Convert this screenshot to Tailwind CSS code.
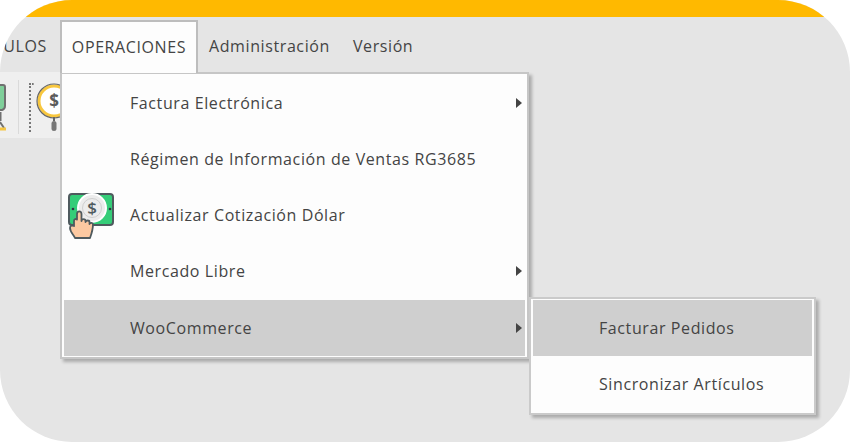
<!DOCTYPE html>
<html><head><meta charset="utf-8"><script src="https://cdn.jsdelivr.net/npm/@tailwindcss/browser@4"></script></head>
<body class="bg-white">
<div class="relative w-[850px] h-[442px] rounded-[72px] overflow-hidden bg-[#e5e5e5] font-['Open_Sans',sans-serif] text-[16px] text-[#444] tracking-[0.6px]">
  <div class="h-[17px] bg-[#ffb900]"></div>
  <div class="h-[55px] flex items-start pt-[3px]">
    <div class="w-[60px] h-[52px] flex items-center justify-end pr-[13px] pb-[1px]"><span>ULOS</span></div>
    <div class="w-[138px] h-[53px] bg-[#fdfdfd] border-[2px] border-b-0 border-[#bdbdbd] flex items-center justify-center pb-[2px] relative z-20">OPERACIONES</div>
    <div class="ml-[11px] h-[52px] flex items-center pb-[1px]">Administración</div>
    <div class="ml-[23px] h-[52px] flex items-center pb-[1px]">Versión</div>
  </div>
  <div class="h-[66px] w-[60px] bg-[#efefef] relative">
    <svg class="absolute left-0 top-[12px]" width="8" height="48" viewBox="0 0 8 48"><path d="M-4 1h7a2 2 0 0 1 2 2v19q0 3-3 4h-6z" fill="#7fcf9a" stroke="#707070" stroke-width="2"/><path d="M0 28v9" stroke="#707070" stroke-width="3"/><path d="M0 38l4 6" stroke="#707070" stroke-width="2"/><path d="M-2 45h8" stroke="#f5c542" stroke-width="3"/></svg>
    <div class="absolute left-[18px] top-[8px] w-px h-[54px] bg-[#dadada]"></div>
    <div class="absolute left-[29px] top-[11px] h-[49px] w-[5px] border-l-[2px] border-t-[2px] border-dotted border-[#777]"></div>
    <svg class="absolute left-[36px] top-[11px]" width="24" height="50" viewBox="0 0 24 50"><circle cx="18" cy="18" r="15" fill="#fff" stroke="#f8c73f" stroke-width="3"/><circle cx="18" cy="18" r="17" fill="none" stroke="#666" stroke-width="1.2"/><text x="18" y="24" text-anchor="middle" font-size="17" font-weight="700" fill="#5c5c5c" font-family="Open Sans" letter-spacing="0">$</text><path d="M18 34v4" stroke="#666" stroke-width="2"/><rect x="15.500" y="38" width="5" height="10" rx="2.500" fill="#777"/></svg>
  </div>

  <div class="absolute left-[60px] top-[72px] w-[469px] h-[287px] bg-[#fdfdfd] border-[2px] border-[#c6c6c6] shadow-[3px_3px_3px_rgba(0,0,0,0.25)] z-10 px-[2px] pt-[1px] flex flex-col">
    <div class="h-[56px] flex items-center pl-[66px] relative">Factura Electrónica<span class="absolute right-[3px] top-[23px] border-l-[6px] border-l-[#444] border-y-[5px] border-y-transparent"></span></div>
    <div class="h-[56px] flex items-center pl-[66px]">Régimen de Información de Ventas RG3685</div>
    <div class="h-[56px] flex items-center pl-[66px] relative">
      <svg class="absolute left-[4px] top-[5px]" width="48" height="47" viewBox="0 0 48 47">
        <rect x="1" y="2" width="44" height="31" rx="3" fill="#35cd78" stroke="#4f5a5e" stroke-width="2"/>
        <circle cx="24" cy="16" r="14" fill="#ececec" stroke="#fff" stroke-width="2"/>
        <circle cx="24" cy="16" r="9.500" fill="none" stroke="#cfcfcf" stroke-width="1"/>
        <text x="24" y="22" text-anchor="middle" font-size="17" font-weight="600" fill="#4f5a5e" font-family="Open Sans" letter-spacing="0">$</text>
        <circle cx="5" cy="17" r="1.3" fill="#334"/><circle cx="42" cy="17" r="1.3" fill="#334"/>
        <path d="M7 46c-1-3-5-6-5-10 0-2.500 2-3 4-2v-5c0-2 2-2.500 3-1.500V22c0-3.500 4.500-3.500 4.500 0v7c0-2.500 4-2.500 4 0v1c.5-2 4-2 4 0v2c.5-1.500 3.500-1.500 3.500 .5 0 4-1 8-3 13.500z" fill="#fdc9a1" stroke="#4f5a5e" stroke-width="1.8" stroke-linejoin="round"/>
      </svg>
      Actualizar Cotización Dólar</div>
    <div class="h-[56px] flex items-center pl-[66px] relative">Mercado Libre<span class="absolute right-[3px] top-[23px] border-l-[6px] border-l-[#444] border-y-[5px] border-y-transparent"></span></div>
    <div class="h-[56px] mt-[1px] pb-[1px] flex items-center pl-[66px] relative bg-[#cfcfcf]">WooCommerce<span class="absolute right-[3px] top-[23px] border-l-[6px] border-l-[#444] border-y-[5px] border-y-transparent"></span></div>
  </div>

  <div class="absolute left-[529px] top-[297px] w-[287px] h-[118px] bg-[#fdfdfd] border-[2px] border-[#cacaca] shadow-[3px_3px_3px_rgba(0,0,0,0.25)] z-20 px-[2px] pt-[1px] flex flex-col">
    <div class="h-[56px] flex items-center pl-[66px] bg-[#cfcfcf]">Facturar Pedidos</div>
    <div class="h-[56px] flex items-center pl-[66px]">Sincronizar Artículos</div>
  </div>
</div>
</body></html>
